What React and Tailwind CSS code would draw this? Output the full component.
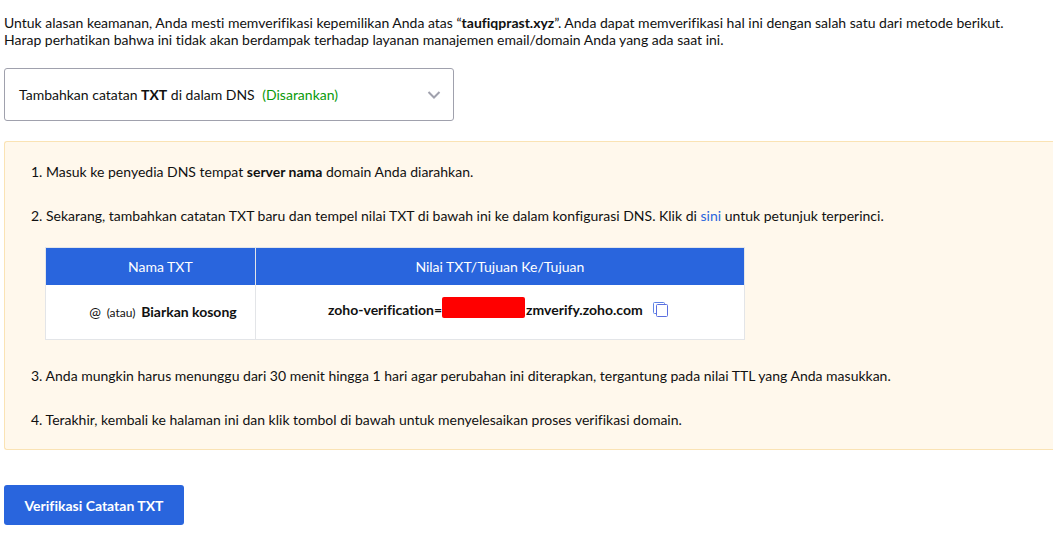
import React, { useState } from "react";

const VALUE_START = "zoho-verification=";
const VALUE_END = "zmverify.zoho.com";

function CopyIcon() {
  return (
    <svg width="15" height="15" viewBox="0 0 15 15" fill="none" aria-hidden="true">
      <path d="M3 11.5H1.5a1 1 0 0 1-1-1v-9a1 1 0 0 1 1-1h9a1 1 0 0 1 1 1V3" stroke="#5f83e6" />
      <rect x="3.5" y="2.5" width="11" height="12" rx="1" stroke="#5b6fe0" fill="#fff" />
    </svg>
  );
}

function MethodPicker() {
  const [open, setOpen] = useState(false);
  return (
    <button
      type="button"
      aria-haspopup="listbox"
      aria-expanded={open}
      onClick={() => setOpen(!open)}
      className="mt-5 flex h-[53px] w-full max-w-[450px] items-center justify-between rounded-[3px] border border-[#a0a1ad] bg-white pr-3 pl-3.5 text-left"
    >
      <span>
        Tambahkan catatan <b>TXT</b> di dalam DNS <span className="ml-1 text-[#0a9a0a]">(Disarankan)</span>
      </span>
      <svg width="14" height="8" viewBox="0 0 14 8" fill="none" aria-hidden="true">
        <path d="M1.5 1l5.5 5.5L12.5 1" stroke="#a0a1ad" strokeWidth="2" />
      </svg>
    </button>
  );
}

export default function App() {
  return (
    <main className="bg-white pt-[14px] pl-1 font-['Lato',sans-serif] text-[14px] leading-[17px] text-[#111] [font-variant-ligatures:none]">
      <p>
        Untuk alasan keamanan, Anda mesti memverifikasi kepemilikan Anda atas “<b>taufiqprast.xyz</b>”. Anda dapat
        memverifikasi hal ini dengan salah satu dari metode berikut.
        <br />
        Harap perhatikan bahwa ini tidak akan berdampak terhadap layanan manajemen email/domain Anda yang ada saat ini.
      </p>
      <MethodPicker />
      <ol className="mt-5 flex flex-col gap-[27px] rounded-l-[3px] border border-r-0 border-[#fae3b4] bg-[#fff8ec] py-[21px] pl-[26px]">
        <li>
          1. Masuk ke penyedia DNS tempat <b>server nama</b> domain Anda diarahkan.
        </li>
        <li>
          <p>
            2. Sekarang, tambahkan catatan TXT baru dan tempel nilai TXT di bawah ini ke dalam konfigurasi DNS. Klik di{" "}
            <a href="#petunjuk" className="text-[#2965dd]">sini</a> untuk petunjuk terperinci.
          </p>
          <table className="mt-[23px] ml-[14px] w-full max-w-[700px] table-fixed border-collapse bg-white">
            <thead>
              <tr className="h-[37px] bg-[#2965dd] text-white">
                <th className="w-[30%] border border-b-0 border-[#e3e5e8] pl-5 font-normal">Nama TXT</th>
                <th className="border border-b-0 border-[#e3e5e8] font-normal">Nilai TXT/Tujuan Ke/Tujuan</th>
              </tr>
            </thead>
            <tbody>
              <tr className="h-[55px]">
                <td className="border border-t-0 border-[#e3e5e8] pr-[18px] text-right">
                  @ <span className="mx-0.5 text-[12px]">(atau)</span> <b>Biarkan kosong</b>
                </td>
                <td className="border border-t-0 border-[#e3e5e8]">
                  <div className="flex items-center justify-center pr-1 pb-1">
                    <b>{VALUE_START}</b>
                    <span className="mr-px mb-1 h-[21px] w-[83px] rounded-[2px] bg-[#ff0000]" />
                    <b>{VALUE_END}</b>
                    <button type="button" aria-label="Salin" className="ml-2.5">
                      <CopyIcon />
                    </button>
                  </div>
                </td>
              </tr>
            </tbody>
          </table>
        </li>
        <li>
          3. Anda mungkin harus menunggu dari 30 menit hingga 1 hari agar perubahan ini diterapkan, tergantung pada
          nilai TTL yang Anda masukkan.
        </li>
        <li>
          4. Terakhir, kembali ke halaman ini dan klik tombol di bawah untuk menyelesaikan proses verifikasi domain.
        </li>
      </ol>
      <button type="button" className="mt-[35px] h-10 min-w-[180px] rounded-[3px] bg-[#2965dd] px-4 font-bold text-white">
        Verifikasi Catatan TXT
      </button>
    </main>
  );
}
